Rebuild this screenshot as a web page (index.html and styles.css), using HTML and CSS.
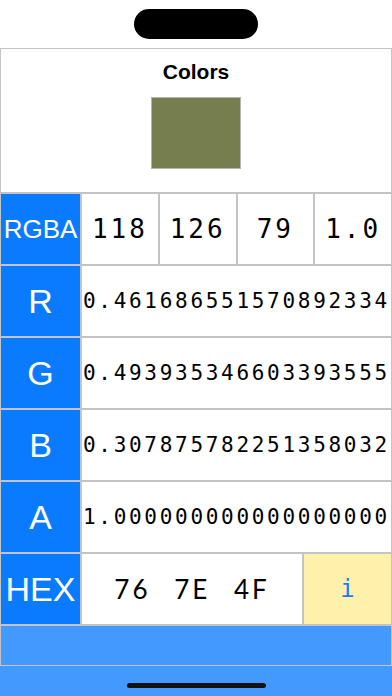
FILE: index.html
```html
<!DOCTYPE html>
<html>
<head>
  <title>Colors</title>
  <link rel="stylesheet" href="styles.css">
</head>
<body>
  <div class="screen">
    <div class="top">
      <div class="island"></div>
    </div>

    <div class="panel">
      <div class="header">
        <h1>Colors</h1>
        <div class="swatch"></div>
      </div>

      <div class="row">
        <div class="label small">RGBA</div>
        <div class="quad">
          <div class="cell num">118</div>
          <div class="cell num">126</div>
          <div class="cell num">79</div>
          <div class="cell num">1.0</div>
        </div>
      </div>

      <div class="row">
        <div class="label">R</div>
        <div class="cell long">0.461686551570892334</div>
      </div>
      <div class="row">
        <div class="label">G</div>
        <div class="cell long">0.493935346603393555</div>
      </div>
      <div class="row">
        <div class="label">B</div>
        <div class="cell long">0.307875782251358032</div>
      </div>
      <div class="row">
        <div class="label">A</div>
        <div class="cell long">1.000000000000000000</div>
      </div>

      <div class="row">
        <div class="label">HEX</div>
        <div class="hexrow">
          <div class="cell hex">76 7E 4F</div>
          <div class="cell info">i</div>
        </div>
      </div>

      <div class="bar"></div>
    </div>

    <div class="bottom">
      <div class="home"></div>
    </div>
  </div>
</body>
</html>
```

FILE: styles.css
```css
body {
  margin: 0;
  background: #ffffff;
  font-family: 'Liberation Sans', Arial, sans-serif;
}

.screen {
  width: 392px;
  height: 696px;
  display: flex;
  flex-direction: column;
  overflow: hidden;
}

.top {
  height: 48px;
  display: flex;
  justify-content: center;
  align-items: flex-start;
}

.island {
  width: 124px;
  height: 30px;
  margin-top: 9px;
  background: #000;
  border-radius: 15px;
}

.panel {
  display: flex;
  flex-direction: column;
  gap: 2px;
  padding: 1px 1px 1px 1px;
  background: #c4c4c4;
}

.header {
  height: 143px;
  background: #fff;
  display: flex;
  flex-direction: column;
  align-items: center;
}

.header h1 {
  margin: 11px 0 0;
  font-size: 21px;
  line-height: 24px;
  font-weight: bold;
  color: #000;
}

.swatch {
  width: 88px;
  height: 70px;
  margin-top: 13px;
  background: #767e4f;
  border: 1px solid #b4b4b4;
}

.row {
  height: 70px;
  display: flex;
  gap: 2px;
}

.label {
  width: 79px;
  flex: none;
  background: #0a7aff;
  color: #fff;
  display: flex;
  align-items: center;
  justify-content: center;
  font-size: 34px;
}

.label.small {
  font-size: 26px;
}

.quad {
  flex: 1;
  display: grid;
  grid-template-columns: repeat(4, 1fr);
  gap: 2px;
}

.hexrow {
  flex: 1;
  display: grid;
  grid-template-columns: 1fr 87px;
  gap: 2px;
}

.cell {
  background: #fff;
  color: #000;
  display: flex;
  align-items: center;
  justify-content: center;
  white-space: pre;
  overflow: hidden;
}

.num {
  font-family: 'DejaVu Sans Mono', 'Liberation Mono', monospace;
  font-size: 26px;
  letter-spacing: 3px;
}

.long {
  flex: 1;
  justify-content: flex-start;
  padding-left: 1px;
  font-family: 'DejaVu Sans Mono', 'Liberation Mono', monospace;
  font-size: 21px;
  letter-spacing: 2.7px;
}

.hex {
  font-family: 'Lato', 'Open Sans', sans-serif;
  font-size: 26px;
  letter-spacing: 3px;
  word-spacing: 14px;
}

.info {
  background: #fff1ab;
  color: #1a7cf5;
  font-family: 'DejaVu Sans Mono', monospace;
  font-size: 24px;
}

.bar {
  height: 39px;
  background: #4499ff;
}

.bottom {
  flex: 1;
  background: #4499ff;
  display: flex;
  justify-content: center;
  align-items: flex-end;
}

.home {
  width: 139px;
  height: 5px;
  margin-bottom: 8px;
  background: #111;
  border-radius: 3px;
}
```
